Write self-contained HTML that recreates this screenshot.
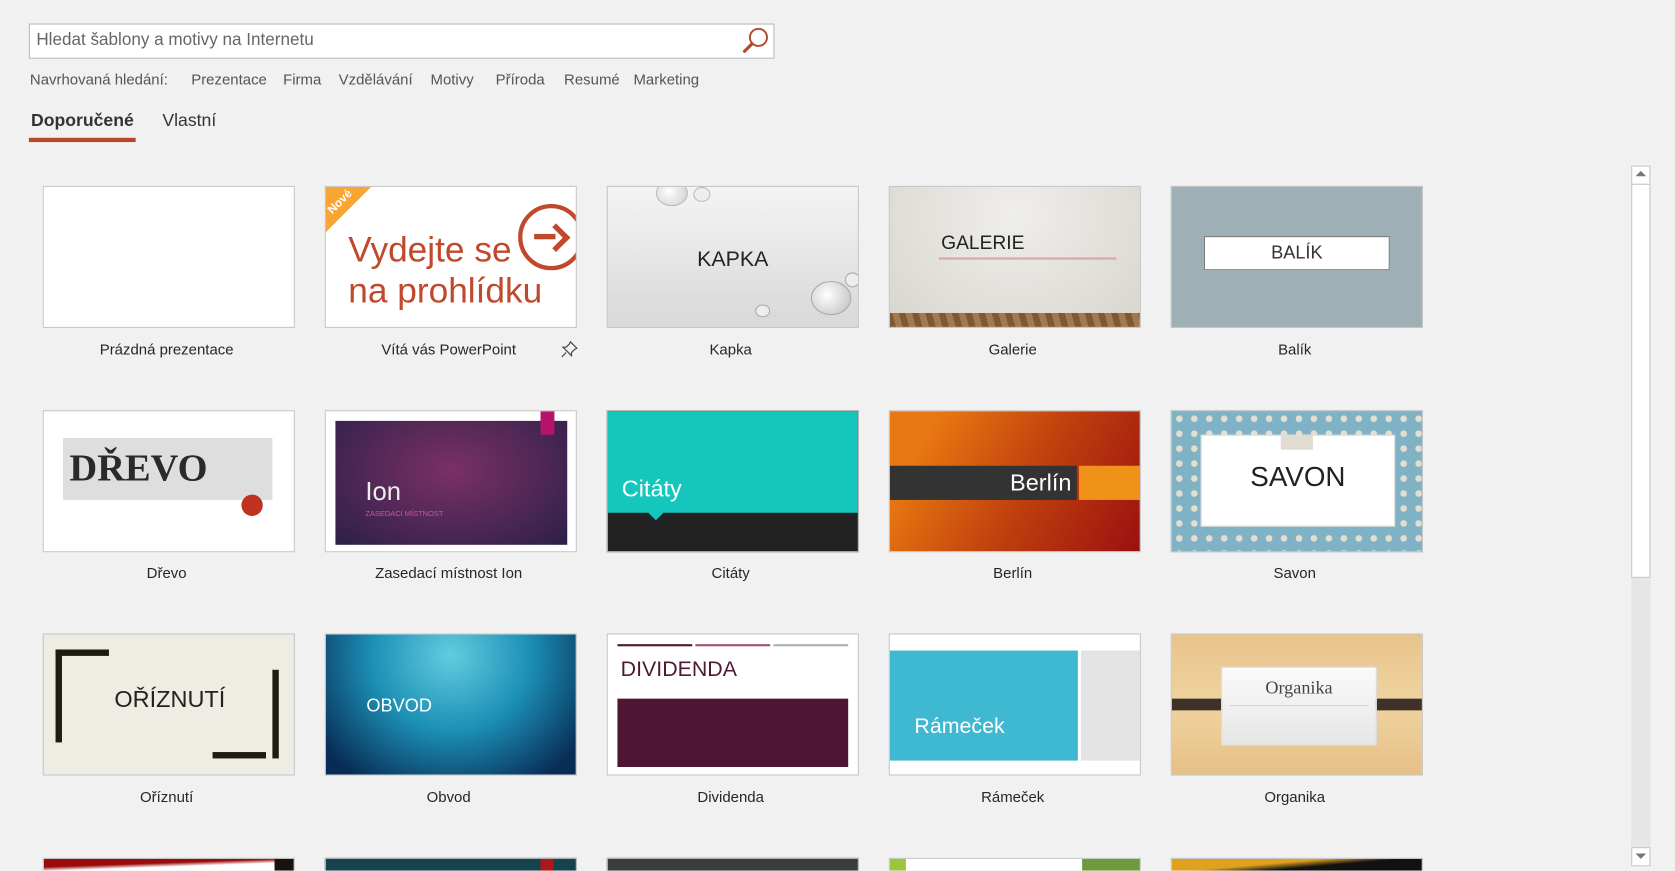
<!DOCTYPE html>
<html><head><meta charset="utf-8"><style>
html,body{margin:0;padding:0;background:#f1f1f1;overflow:hidden;width:1675px;height:871px}
#w{position:absolute;left:0;top:0;width:1568px;height:815px;overflow:hidden;transform:scale(1.06824);transform-origin:0 0;font-family:"Segoe UI","Liberation Sans",sans-serif}
.a{position:absolute}
.t{position:absolute;width:234px;height:131px;border:1px solid #c6c6c6;overflow:hidden;background:#fff}
.r4{height:11px;border-bottom:none}
.l{position:absolute;width:236px;text-align:center;font-size:14px;color:#262626}
.s{position:absolute;top:66px;font-size:14px;color:#555}
</style></head><body><div id="w">
<div class="a" style="left:27px;top:22px;width:696px;height:31px;background:#fff;border:1px solid #b9b9b9"></div>
<div class="a" style="left:34px;top:29px;font-size:16px;color:#666">Hledat šablony a motivy na Internetu</div>
<svg class="a" style="left:694px;top:24px" width="28" height="28" viewBox="0 0 28 28"><circle cx="16" cy="11" r="8" fill="none" stroke="#b7472a" stroke-width="1.8"/><path d="M10 17 L3 24" stroke="#b7472a" stroke-width="3" stroke-linecap="round"/></svg>
<div class="s" style="left:28px">Navrhovaná hledání:</div>
<div class="s" style="left:179px">Prezentace</div>
<div class="s" style="left:265px">Firma</div>
<div class="s" style="left:317px">Vzdělávání</div>
<div class="s" style="left:403px">Motivy</div>
<div class="s" style="left:464px">Příroda</div>
<div class="s" style="left:528px">Resumé</div>
<div class="s" style="left:593px">Marketing</div>
<div class="a" style="left:29px;top:104px;font-size:16.5px;font-weight:bold;color:#333">Doporučené</div>
<div class="a" style="left:152px;top:104px;font-size:16.5px;color:#333">Vlastní</div>
<div class="a" style="left:27px;top:129px;width:100px;height:4px;background:#b7472a"></div>

<!-- row1 -->
<div class="t" style="left:40px;top:174px"></div>
<div class="l" style="left:38px;top:319px">Prázdná prezentace</div>

<div class="t" style="left:304px;top:174px">
<div class="a" style="left:-30px;top:-30px;width:60px;height:60px;background:#f9a533;transform:rotate(45deg)"></div>
<div class="a" style="left:0px;top:8px;font-size:11px;color:#fff;font-weight:bold;transform:rotate(-45deg)">Nové</div>
<div class="a" style="left:21px;top:40px;font-size:33px;line-height:38px;color:#c0482b">Vydejte se<br>na prohlídku</div>
<div class="a" style="left:180px;top:16px;width:54px;height:54px;border:4px solid #c0482b;border-radius:50%"></div>
<div class="a" style="left:195px;top:44px;width:20px;height:5px;background:#c0482b"></div>
<div class="a" style="left:206px;top:38px;width:14px;height:14px;border-top:5px solid #c0482b;border-right:5px solid #c0482b;transform:rotate(45deg)"></div>
</div>
<div class="l" style="left:302px;top:319px">Vítá vás PowerPoint</div>
<svg class="a" style="left:524px;top:318px" width="18" height="18" viewBox="0 0 18 18"><path d="M10 2 L16 8 L14 9 L11 12 L11 15 L3 7 L6 7 L9 4 Z M6 12 L2 16" fill="none" stroke="#444" stroke-width="1.1"/></svg>

<div class="t" style="left:568px;top:174px;background:linear-gradient(#f4f4f4,#d8d8d8)">
<div class="a" style="left:0;top:57px;width:234px;text-align:center;font-size:20px;color:#222">KAPKA</div>
<div class="a" style="left:45px;top:-6px;width:28px;height:22px;border-radius:50%;background:radial-gradient(circle at 40% 40%,#fff,#ccc);border:1px solid #bbb"></div>
<div class="a" style="left:80px;top:0px;width:14px;height:12px;border-radius:50%;border:1px solid #bbb;background:#eee"></div>
<div class="a" style="left:190px;top:88px;width:36px;height:30px;border-radius:50%;background:radial-gradient(circle at 40% 40%,#fff,#bbb);border:1px solid #aaa"></div>
<div class="a" style="left:138px;top:110px;width:12px;height:10px;border-radius:50%;border:1px solid #aaa;background:#eee"></div>
<div class="a" style="left:222px;top:80px;width:12px;height:12px;border-radius:50%;border:1px solid #aaa;background:#eee"></div>
</div>
<div class="l" style="left:566px;top:319px">Kapka</div>

<div class="t" style="left:832px;top:174px;background:radial-gradient(ellipse at 50% 20%,#efeeea,#d8d5cf)">
<div class="a" style="left:48px;top:42px;font-size:18px;color:#222">GALERIE</div>
<div class="a" style="left:46px;top:66px;width:166px;height:2px;background:#dba4ad"></div>
<div class="a" style="left:0;top:118px;width:234px;height:15px;background:repeating-linear-gradient(75deg,#7d5a36 0 6px,#a37a4e 6px 12px)"></div>
</div>
<div class="l" style="left:830px;top:319px">Galerie</div>

<div class="t" style="left:1096px;top:174px;background:#9eb0b5">
<div class="a" style="left:30px;top:46px;width:172px;height:30px;background:#fff;border:1px solid #777;text-align:center;font-size:17px;line-height:30px;color:#333">BALÍK</div>
</div>
<div class="l" style="left:1094px;top:319px">Balík</div>

<!-- row2 -->
<div class="t" style="left:40px;top:384px">
<div class="a" style="left:18px;top:25px;width:196px;height:58px;background:#dedede"></div>
<div class="a" style="left:24px;top:32px;font-family:'Liberation Serif',serif;font-weight:bold;font-size:36px;color:#2a2a2a">DŘEVO</div>
<div class="a" style="left:185px;top:78px;width:20px;height:20px;border-radius:50%;background:#c0321f"></div>
</div>
<div class="l" style="left:38px;top:528px">Dřevo</div>

<div class="t" style="left:304px;top:384px">
<div class="a" style="left:9px;top:9px;width:217px;height:116px;background:radial-gradient(ellipse at 50% 40%,#7a3065,#2c2048)"></div>
<div class="a" style="left:201px;top:0;width:13px;height:22px;background:#b5146a"></div>
<div class="a" style="left:37px;top:62px;font-size:24px;color:#eee">Ion</div>
<div class="a" style="left:37px;top:93px;font-size:7px;color:#c05aa5">ZASEDACÍ MÍSTNOST</div>
</div>
<div class="l" style="left:302px;top:528px">Zasedací místnost Ion</div>

<div class="t" style="left:568px;top:384px;background:#222">
<div class="a" style="left:0;top:0;width:236px;height:95px;background:#15c6bc"></div>
<div class="a" style="left:40px;top:90px;width:10px;height:10px;background:#15c6bc;transform:rotate(45deg)"></div>
<div class="a" style="left:13px;top:60px;font-size:22px;color:#fff">Citáty</div>
</div>
<div class="l" style="left:566px;top:528px">Citáty</div>

<div class="t" style="left:832px;top:384px;background:linear-gradient(120deg,#e87811 15%,#c0400e 55%,#9a1010)">
<div class="a" style="left:0;top:51px;width:175px;height:32px;background:#333"></div>
<div class="a" style="left:0;top:51px;width:170px;text-align:right;font-size:22px;line-height:32px;color:#fff">Berlín</div>
<div class="a" style="left:177px;top:51px;width:60px;height:32px;background:#f0921a"></div>
</div>
<div class="l" style="left:830px;top:528px">Berlín</div>

<div class="t" style="left:1096px;top:384px;background:radial-gradient(circle,#e4ded2 30%,transparent 32%) 0 0/14px 14px,#7fb2c4">
<div class="a" style="left:27px;top:22px;width:180px;height:84px;background:#fff;border:1px solid #ddd"></div>
<div class="a" style="left:102px;top:22px;width:30px;height:14px;background:#e0dcd2"></div>
<div class="a" style="left:27px;top:46px;width:182px;text-align:center;font-size:26px;color:#222">SAVON</div>
</div>
<div class="l" style="left:1094px;top:528px">Savon</div>

<!-- row3 -->
<div class="t" style="left:40px;top:593px;background:#efece4">
<div class="a" style="left:11px;top:14px;width:50px;height:6px;background:#1c1c12"></div>
<div class="a" style="left:11px;top:14px;width:6px;height:87px;background:#1c1c12"></div>
<div class="a" style="left:158px;top:110px;width:50px;height:6px;background:#1c1c12"></div>
<div class="a" style="left:214px;top:33px;width:6px;height:83px;background:#1c1c12"></div>
<div class="a" style="left:0;top:48px;width:236px;text-align:center;font-size:22px;color:#222">OŘÍZNUTÍ</div>
</div>
<div class="l" style="left:38px;top:738px">Oříznutí</div>

<div class="t" style="left:304px;top:593px;background:radial-gradient(ellipse at 50% 15%,#62cde0,#1c8fb5 45%,#082c55 90%)">
<div class="a" style="left:38px;top:57px;font-size:17px;color:#fff">OBVOD</div>
</div>
<div class="l" style="left:302px;top:738px">Obvod</div>

<div class="t" style="left:568px;top:593px">
<div class="a" style="left:9px;top:9px;width:70px;height:2px;background:#4e1a33"></div>
<div class="a" style="left:82px;top:9px;width:70px;height:2px;background:#a84d7a"></div>
<div class="a" style="left:155px;top:9px;width:70px;height:2px;background:#aab0b8"></div>
<div class="a" style="left:12px;top:22px;font-size:20px;color:#4e1a33">DIVIDENDA</div>
<div class="a" style="left:9px;top:60px;width:216px;height:64px;background:#4f1535"></div>
</div>
<div class="l" style="left:566px;top:738px">Dividenda</div>

<div class="t" style="left:832px;top:593px">
<div class="a" style="left:0;top:15px;width:176px;height:103px;background:#3fb8d2"></div>
<div class="a" style="left:179px;top:15px;width:56px;height:103px;background:#e3e3e3"></div>
<div class="a" style="left:23px;top:75px;font-size:20px;color:#fff">Rámeček</div>
</div>
<div class="l" style="left:830px;top:738px">Rámeček</div>

<div class="t" style="left:1096px;top:593px;background:linear-gradient(#e8c48c,#f0d3a0 50%,#e6c086)">
<div class="a" style="left:0;top:60px;width:236px;height:11px;background:#3e3128"></div>
<div class="a" style="left:46px;top:30px;width:144px;height:72px;background:linear-gradient(#fafafa,#e6e6e6);border:1px solid #ddd"></div>
<div class="a" style="left:46px;top:40px;width:146px;text-align:center;font-family:'Liberation Serif',serif;font-size:17px;color:#444">Organika</div>
<div class="a" style="left:54px;top:66px;width:130px;height:1px;background:#d6d6c8"></div>
</div>
<div class="l" style="left:1094px;top:738px">Organika</div>

<!-- row4 partial -->
<div class="t r4" style="left:40px;top:803px;background:linear-gradient(178deg,#9a0c0c 40%,#fff 60%)"><div class="a" style="left:216px;top:0;width:18px;height:12px;background:#1a1010"></div></div>
<div class="t r4" style="left:304px;top:803px;background:#15444f"><div class="a" style="left:201px;top:0;width:12px;height:12px;background:#b01818"></div></div>
<div class="t r4" style="left:568px;top:803px;background:#3a3c3e"></div>
<div class="t r4" style="left:832px;top:803px;background:#fff"><div class="a" style="left:0;top:0;width:15px;height:12px;background:#9cc43c"></div><div class="a" style="left:180px;top:0;width:56px;height:12px;background:#6c9a3c"></div></div>
<div class="t r4" style="left:1096px;top:803px;background:linear-gradient(175deg,#e0a020 40%,#111 60%)"></div>

<!-- scrollbar -->
<div class="a" style="left:1527px;top:155px;width:18px;height:656px;background:#e6e6e6"></div>
<div class="a" style="left:1527px;top:155px;width:16px;height:16px;background:#fff;border:1px solid #c6c6c6"></div>
<div class="a" style="left:1531px;top:160px;width:0;height:0;border-left:5px solid transparent;border-right:5px solid transparent;border-bottom:5px solid #777"></div>
<div class="a" style="left:1527px;top:172px;width:16px;height:367px;background:#fff;border:1px solid #c6c6c6"></div>
<div class="a" style="left:1527px;top:793px;width:16px;height:16px;background:#fff;border:1px solid #c6c6c6"></div>
<div class="a" style="left:1531px;top:799px;width:0;height:0;border-left:5px solid transparent;border-right:5px solid transparent;border-top:5px solid #777"></div>
</div></body></html>
